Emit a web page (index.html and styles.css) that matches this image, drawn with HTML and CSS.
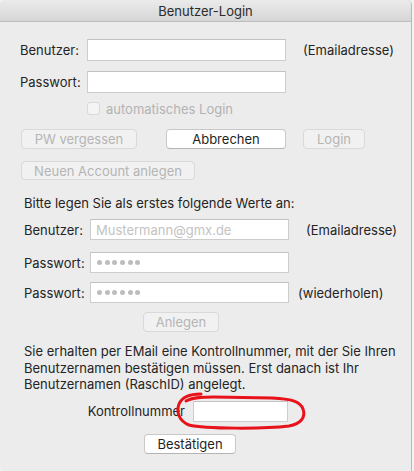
FILE: index.html
```html
<!DOCTYPE html>
<html lang="de">
<head>
<meta charset="utf-8">
<title>Benutzer-Login</title>
<link rel="stylesheet" href="styles.css">
</head>
<body>
<div class="window">
  <div class="titlebar">Benutzer-Login</div>

  <div class="login">
    <div class="row">
      <span class="lbl">Benutzer:</span>
      <span class="field"></span>
      <span class="hint">(Emailadresse)</span>
    </div>
    <div class="row r2">
      <span class="lbl">Passwort:</span>
      <span class="field"></span>
    </div>
    <div class="check">
      <span class="box"></span>
      <span class="check-text">automatisches Login</span>
    </div>
    <div class="btnrow">
      <span class="btn disabled b-pw">PW vergessen</span>
      <span class="btn b-cancel">Abbrechen</span>
      <span class="btn disabled b-login">Login</span>
    </div>
    <div class="btnrow2">
      <span class="btn disabled b-new">Neuen Account anlegen</span>
    </div>
  </div>

  <div class="register">
    <p class="intro">Bitte legen Sie als erstes folgende Werte an:</p>
    <div class="row2">
      <span class="lbl2">Benutzer:</span>
      <span class="field2 placeholder">Mustermann@gmx.de</span>
      <span class="hint2">(Emailadresse)</span>
    </div>
    <div class="row2 pw1">
      <span class="lbl2">Passwort:</span>
      <span class="field2 dots"><i></i><i></i><i></i><i></i><i></i><i></i></span>
    </div>
    <div class="row2 pw2">
      <span class="lbl2">Passwort:</span>
      <span class="field2 dots"><i></i><i></i><i></i><i></i><i></i><i></i></span>
      <span class="hint3">(wiederholen)</span>
    </div>
    <div class="anlegen-row">
      <span class="btn disabled b-anlegen">Anlegen</span>
    </div>
    <p class="info">Sie erhalten per EMail eine Kontrollnummer, mit der Sie Ihren<br>Benutzernamen bestätigen müssen. Erst danach ist Ihr<br>Benutzernamen (RaschID) angelegt.</p>
    <div class="kn-row">
      <span class="kn-lbl">Kontrollnummer</span>
      <span class="field3"></span>
    </div>
    <div class="confirm-row">
      <span class="btn b-confirm">Bestätigen</span>
    </div>
  </div>

  <svg class="marker" width="412" height="471" viewBox="0 0 412 471">
    <path d="M201,394 C190,394 182,397 179,404 C176,412 179,421 189,425 C205,429 265,429 289,426 C301,424 306,417 303,409 C300,401 291,399 272,398 L214,397 C204,397 193,397 186,401" fill="none" stroke="#e8121a" stroke-width="3" stroke-linecap="round" stroke-linejoin="round"/>
  </svg>
</div>
</body>
</html>
```

FILE: styles.css
```css
html, body {
  margin: 0;
  padding: 0;
}
body {
  background: #f2f2f2;
  font-family: Inter, "Liberation Sans", Arial, sans-serif;
  font-size: 13px;
  color: #242424;
}
.window {
  position: relative;
  width: 412px;
  height: 471px;
  box-sizing: border-box;
  background: #ececec;
  border-right: 1px solid #b9b9b9;
  border-radius: 5px 5px 0 5px;
  overflow: hidden;
}
.titlebar {
  height: 21px;
  border-bottom: 1px solid #bdbdbd;
  background: linear-gradient(#ebebeb, #d6d6d6);
  text-align: center;
  line-height: 23px;
  font-size: 13px;
  color: #2a2a2a;
}

/* fields */
.field, .field2, .field3 {
  display: block;
  box-sizing: border-box;
  background: #fff;
  border: 1px solid #cdcdcd;
  border-top-color: #c2c2c2;
}

/* section 1 */
.login {
  padding: 17px 0 0 20px;
}
.row {
  display: flex;
  align-items: center;
  height: 22px;
}
.r2 { margin-top: 10px; }
.lbl { width: 67px; }
.field { width: 199px; height: 22px; }
.hint { margin-left: 17px; }

.check {
  display: flex;
  align-items: center;
  height: 13px;
  margin: 9px 0 0 67px;
  color: #b3b3b3;
}
.box {
  width: 13px;
  height: 13px;
  box-sizing: border-box;
  border: 1px solid #d8d8d8;
  border-radius: 3px;
  background: #f4f4f4;
}
.check-text { margin-left: 6px; }

.btn {
  display: flex;
  align-items: center;
  justify-content: center;
  box-sizing: border-box;
  height: 20px;
  border-radius: 4px;
  background: #fff;
  border: 1px solid #c8c8c8;
  border-bottom-color: #b4b4b4;
  color: #1f1f1f;
}
.btn.disabled {
  background: #f1f1f1;
  border: 1px solid #d9d9d9;
  color: #b5b5b5;
}
.btnrow {
  display: flex;
  margin: 14px 0 0 1px;
}
.b-pw { width: 116px; }
.b-cancel { width: 120px; margin-left: 29px; }
.b-login { width: 62px; margin-left: 17px; }
.btnrow2 {
  display: flex;
  margin: 12px 0 0 1px;
}
.b-new { width: 174px; height: 19px; }

/* section 2 */
.register {
  padding-left: 24px;
}
.intro {
  margin: 15px 0 0;
  line-height: 16px;
}
.row2 {
  display: flex;
  align-items: center;
  height: 21px;
  margin-top: 8px;
}
.pw1 { margin-top: 12px; }
.pw2 { margin-top: 9px; }
.lbl2 { width: 66px; }
.field2 {
  width: 199px;
  height: 21px;
  display: flex;
  align-items: center;
  padding-left: 5px;
}
.placeholder { color: #c3c3c3; }
.dots i {
  display: block;
  width: 5px;
  height: 5px;
  border-radius: 50%;
  background: #bdbdbd;
  margin-left: 2.7px;
}
.dots i:first-child { margin-left: 1px; }
.hint2 { margin-left: 17px; }
.hint3 { margin-left: 9px; }

.anlegen-row {
  display: flex;
  margin: 9px 0 0 119px;
}
.b-anlegen { width: 76px; }

.info {
  margin: 11px 0 0;
  line-height: 16.5px;
}
.kn-row {
  display: flex;
  align-items: center;
  margin-top: 8px;
  height: 21px;
}
.kn-lbl {
  width: 161px;
  text-align: right;
}
.field3 {
  width: 95px;
  height: 21px;
  margin-left: 8px;
}
.confirm-row {
  display: flex;
  margin: 12px 0 0 120px;
}
.b-confirm { width: 92px; }

.marker {
  position: absolute;
  left: 0;
  top: 0;
  pointer-events: none;
}
```
